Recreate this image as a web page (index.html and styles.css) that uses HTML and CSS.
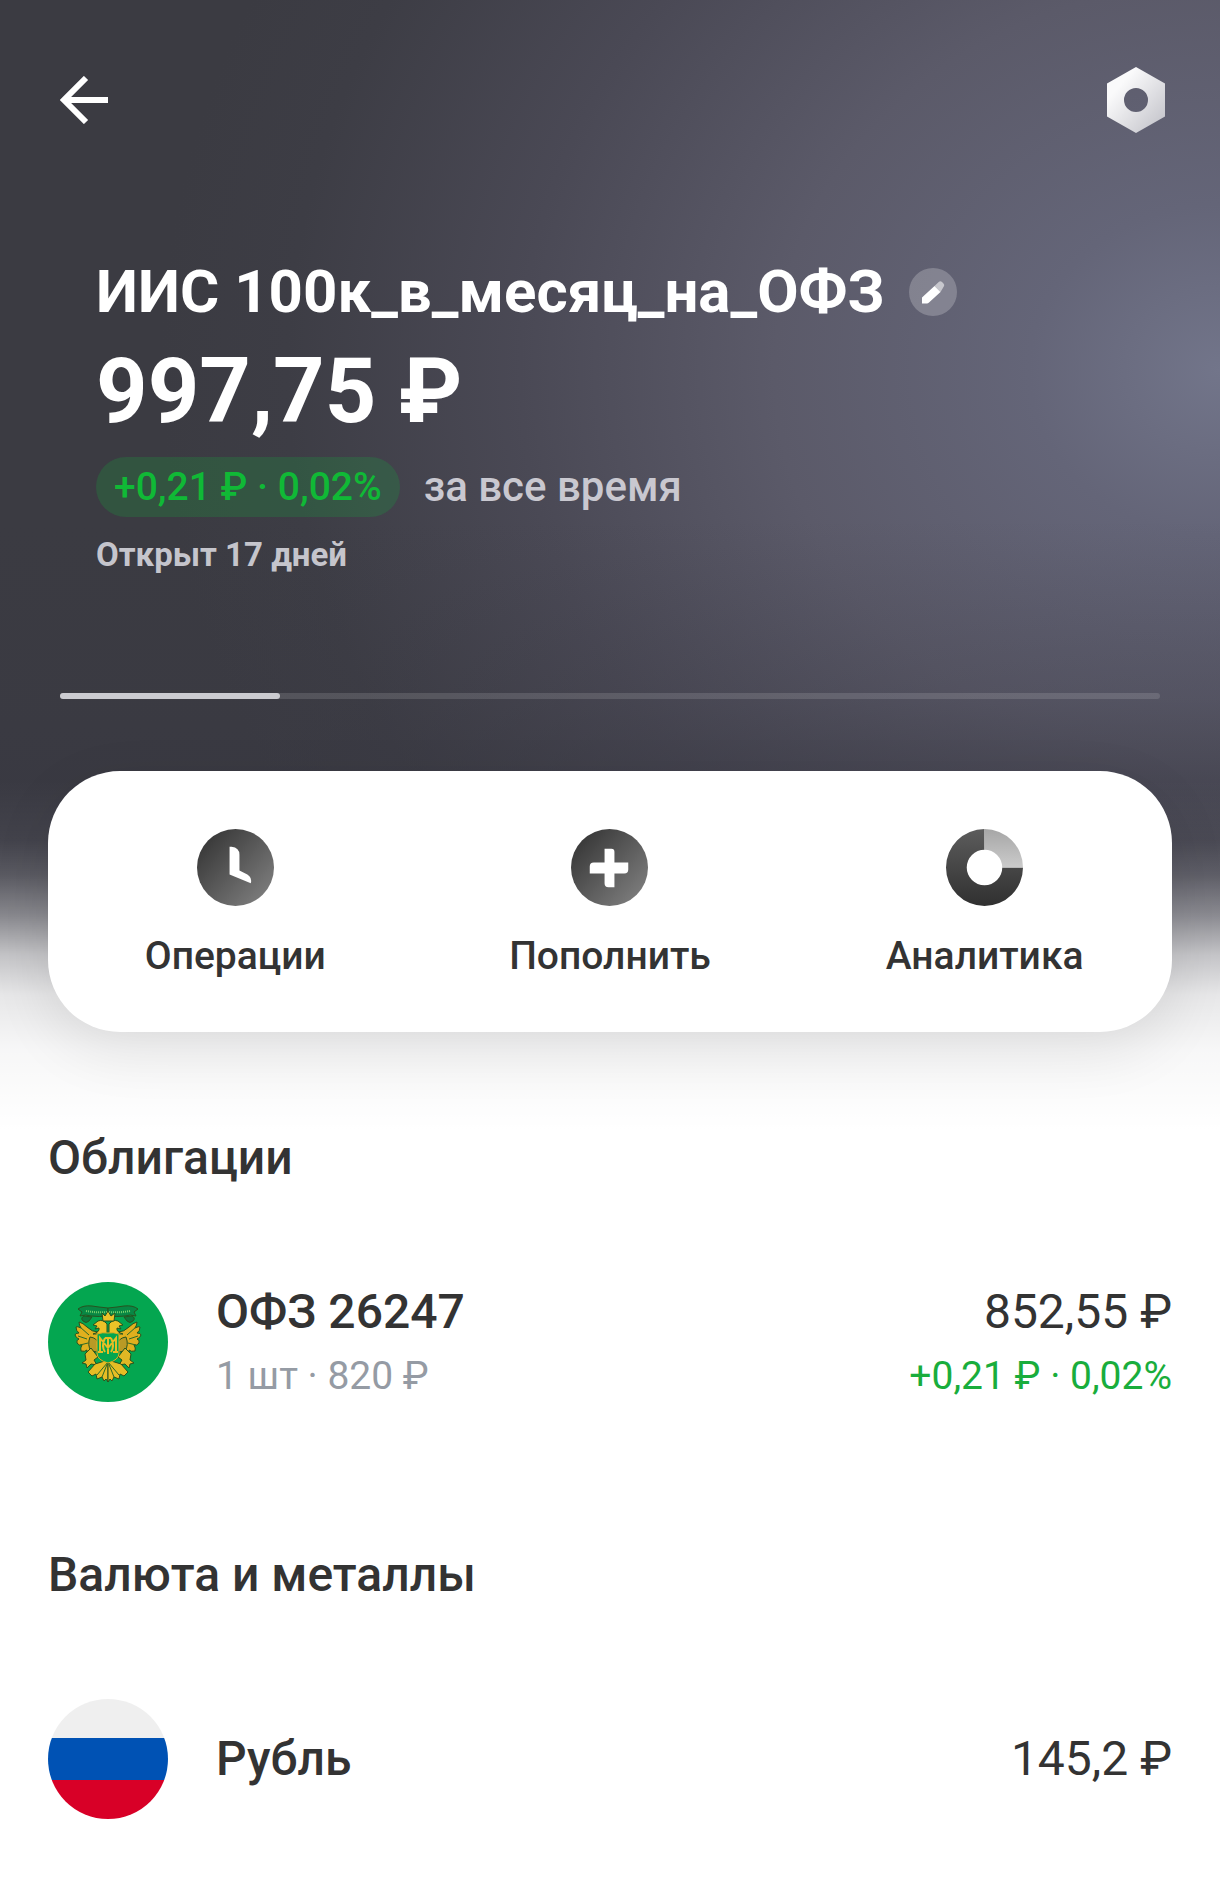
FILE: index.html
```html
<!DOCTYPE html>
<html lang="ru">
<head>
  <meta charset="utf-8">
  <meta name="viewport" content="width=device-width, initial-scale=1">
  <title>ИИС</title>
  <link rel="stylesheet" href="styles.css">
</head>
<body>
  <div class="page">
    <header class="topbar">
      <button class="icon-button" type="button" aria-label="Назад">
        <svg width="48" height="48" viewBox="0 0 48 48" fill="none" stroke="#fff" stroke-width="6"><path d="M48 24H5M26 2 4 24l22 22"/></svg>
      </button>
      <button class="icon-button" type="button" aria-label="Настройки">
        <svg width="66" height="66" viewBox="0 0 66 66">
          <defs><linearGradient id="nut" x1="0" y1="0" x2="1" y2="1"><stop offset=".25" stop-color="#fafafb"/><stop offset="1" stop-color="#bfbfc6"/></linearGradient></defs>
          <path fill="url(#nut)" fill-rule="evenodd" d="M33 0 62 16.500v33L33 66 4 49.500v-33zM33 21a12 12 0 1 0 0 24 12 12 0 0 0 0-24z"/>
        </svg>
      </button>
    </header>

    <section class="summary">
      <div class="title-row">
        <h1 class="title">ИИС 100к_в_месяц_на_ОФЗ</h1>
        <button class="icon-button" type="button" aria-label="Переименовать">
          <svg width="48" height="48" viewBox="0 0 48 48">
            <circle cx="24" cy="24" r="24" fill="#fff" fill-opacity=".22"/>
            <path fill="#fff" d="M13 29.500 25.500 18l6 6L20 34.500q-1 1-2 1h-5z"/>
            <path fill="#fff" fill-opacity=".55" d="m25.500 18 4.500-4.200q1.500-1.200 3 .2l1.500 1.500q1.500 1.500.3 3L31.500 24z"/>
          </svg>
        </button>
      </div>
      <p class="amount">997,75 ₽</p>
      <div class="profit-row">
        <span class="pill">+0,21 ₽ · 0,02%</span>
        <span class="period">за все время</span>
      </div>
      <p class="opened">Открыт 17 дней</p>
    </section>

    <div class="progress"><div class="progress-fill" style="width: 20%"></div></div>

    <nav class="actions">
      <button class="action" type="button">
        <svg width="77" height="77" viewBox="0 0 78 78">
          <defs><linearGradient id="disc" x1=".1" y1=".15" x2=".9" y2=".9"><stop offset="0" stop-color="#393939"/><stop offset="1" stop-color="#7d7d7d"/></linearGradient></defs>
          <circle cx="39" cy="39" r="39" fill="url(#disc)"/>
          <path fill="#fff" d="M33 18h2q8 1 8 8v16l8 4q5 3 3.500 9L33 46z"/>
        </svg>
        <span>Операции</span>
      </button>
      <button class="action" type="button">
        <svg width="77" height="77" viewBox="0 0 78 78">
          <circle cx="39" cy="39" r="39" fill="url(#disc)"/>
          <path fill="#fff" d="M34 20h7q3 0 3 3v11h14v7q0 4-4 4H44v14h-6q-4 0-4-4V45H19v-7q0-4 4-4h11z"/>
        </svg>
        <span>Пополнить</span>
      </button>
      <button class="action" type="button">
        <svg width="77" height="77" viewBox="0 0 78 78">
          <defs>
            <linearGradient id="ring" x1="0" y1="0" x2="0" y2="1"><stop offset="0" stop-color="#5c5c5c"/><stop offset="1" stop-color="#303030"/></linearGradient>
            <linearGradient id="slice" x1="0" y1="0" x2="0" y2="1"><stop offset="0" stop-color="#a6a6a6"/><stop offset="1" stop-color="#cbcbcb"/></linearGradient>
          </defs>
          <path fill="url(#ring)" d="M39 0a39 39 0 1 0 39 39H57a18 18 0 1 1-18-18z"/>
          <path fill="url(#slice)" d="M39 0a39 39 0 0 1 39 39H57a18 18 0 0 0-18-18z"/>
        </svg>
        <span>Аналитика</span>
      </button>
    </nav>

    <main class="holdings">
      <section class="group">
        <h2 class="group-title">Облигации</h2>
        <div class="asset">
          <svg width="120" height="120" viewBox="0 0 120 120" aria-hidden="true">
            <circle cx="60" cy="60" r="60" fill="#04a650"/>
            <g id="emblem-side" stroke="#27531f" stroke-width="1" stroke-linejoin="round">
              <path fill="#088744" d="M60 26q-10-1-16-2-9-1-14 3l4 3-2 4q6-2 11 0 8 1 17 0z"/>
              <path fill="#0b7a3d" d="M36 34q-4 2-1 5t6 0l3-4z"/>
              <path fill="#e0b01e" d="M50 50q-6 0-11-5-4-4-8-5 0 3 2 6-4-2-5-1 0 4 3 6-4 0-4 2 1 3 4 4-3 1-2 4 2 3 5 2-2 3-1 6 4 1 6-1-1 4 1 7l5-6 6-8z"/>
              <path fill="#ecc328" d="M59 52V42q-4-5-9-3l-5 4 4 1-2 3 4-1q1 4-6 6z"/>
              <path fill="#b99a25" d="M42 55q7 1 8 6l-1 9-6-1q-4-6-1-14z"/>
              <path fill="#dfb724" d="m43 66-6 6 1 6-4 3 4 1 1 4 4-4 6 1-3-5 4-3z"/>
              <path fill="#e6bd25" d="M60 78 47 82l-7 8 4 4 4-2 1 5 5-2 2 4 2-2 2 3z"/>
              <path fill="none" stroke="#2c6a27" d="m60 80-11 13M60 80l-6 15M32 45l9 8m-11 1 9 3m-7 6 8-2"/>
              <path fill="none" stroke="#78d06c" stroke-width="2" stroke-dasharray="1 1" d="M38 29q11 2 22 1"/>
            </g>
            <use href="#emblem-side" transform="translate(120 0) scale(-1 1)"/>
            <path fill="#ecc328" stroke="#27531f" d="m54 31 3 3 3-5 3 5 4-3-1 8H55z"/>
            <path fill="#04a650" stroke="#e0b01e" d="M49 52q6-2 11-1 5-1 11 1v19q0 7-11 10-11-3-11-10z"/>
            <path fill="none" stroke="#e6bd25" stroke-width="2" d="M52 70V56l8 10 8-10v14M50 70h5M65 70h5M57 56q-4 8 0 14M63 56q4 8 0 14M60 56v16M57 56h6"/>
          </svg>
          <div class="asset-text">
            <h3 class="asset-name">ОФЗ 26247</h3>
            <p class="asset-note">1 шт · 820 ₽</p>
          </div>
          <div class="asset-text asset-value">
            <p class="asset-sum">852,55 ₽</p>
            <p class="asset-note gain">+0,21 ₽ · 0,02%</p>
          </div>
        </div>
      </section>

      <section class="group">
        <h2 class="group-title">Валюта и металлы</h2>
        <div class="asset">
          <div class="flag" role="img" aria-label="Флаг России"></div>
          <div class="asset-text">
            <h3 class="asset-name">Рубль</h3>
          </div>
          <div class="asset-text asset-value">
            <p class="asset-sum">145,2 ₽</p>
          </div>
        </div>
      </section>
    </main>
  </div>
</body>
</html>
```

FILE: styles.css
```css
* {
  box-sizing: border-box;
}

body,
h1,
h2,
h3,
p {
  margin: 0;
}

body {
  background: #fff;
  color: #333;
  font-family: Roboto, "Noto Sans", sans-serif;
}

button {
  padding: 0;
  border: 0;
  background: none;
  color: inherit;
  font: inherit;
  cursor: pointer;
}

svg {
  display: block;
  flex: none;
}

.page {
  padding: 67px 48px 76px;
  background-color: #fff;
  background-image:
    linear-gradient(to bottom, transparent 780px, rgba(255, 255, 255, 0.05) 840px, rgba(255, 255, 255, 0.17) 875px, rgba(255, 255, 255, 0.4) 915px, rgba(255, 255, 255, 0.7) 955px, rgba(255, 255, 255, 0.88) 995px, rgba(255, 255, 255, 0.96) 1050px, #fff 1130px),
    linear-gradient(to bottom, rgba(56, 56, 66, 0) 520px, rgba(56, 56, 66, 0.25) 700px, rgba(56, 56, 66, 0.75) 850px),
    radial-gradient(1060px 920px at 100% 370px, #72758a 0%, #646578 18%, #5b5a69 42%, #4a4955 66%, #3d3d45 88%, #3b3b42 100%);
  background-repeat: no-repeat;
  background-size: 100% 1140px;
}

.topbar {
  display: flex;
  align-items: center;
  justify-content: space-between;
  padding: 0 3px 0 12px;
}

.summary {
  padding: 123px 48px 0;
  color: #fff;
}

.title-row {
  display: flex;
  align-items: center;
  gap: 24px;
}

.title {
  font-size: 60px;
  line-height: 72px;
  font-weight: 700;
}

.amount {
  margin-top: 10px;
  font-size: 90px;
  line-height: 108px;
  font-weight: 700;
}

.profit-row {
  display: flex;
  align-items: center;
  gap: 24px;
  margin-top: 10px;
}

.pill {
  padding: 0 18px;
  border-radius: 30px;
  background: rgba(16, 185, 60, 0.2);
  color: #10b936;
  font-size: 39px;
  line-height: 60px;
  font-weight: 500;
}

.period {
  color: #c9c8d0;
  font-size: 42px;
  line-height: 62px;
  font-weight: 500;
}

.opened {
  margin-top: 17px;
  color: #c5c5cc;
  font-size: 33px;
  line-height: 40px;
  font-weight: 700;
}

.progress {
  height: 6px;
  margin: 118px 12px 72px;
  border-radius: 3px;
  background: rgba(255, 255, 255, 0.13);
}

.progress-fill {
  height: 6px;
  border-radius: 3px;
  background: #cbcbd0;
}

.actions {
  display: grid;
  grid-template-columns: repeat(3, 1fr);
  padding: 58px 0 52px;
  border-radius: 72px;
  background: #fff;
  box-shadow: 0 18px 60px rgba(0, 0, 0, 0.09);
}

.action {
  display: flex;
  flex-direction: column;
  align-items: center;
  gap: 26px;
  font-size: 39px;
  line-height: 48px;
  font-weight: 500;
}

.holdings {
  display: flex;
  flex-direction: column;
  gap: 145px;
  padding-top: 98px;
}

.group {
  display: flex;
  flex-direction: column;
  gap: 96px;
}

.group-title {
  font-size: 48px;
  line-height: 56px;
  font-weight: 500;
}

.asset {
  display: flex;
  align-items: center;
  gap: 48px;
}

.asset-text {
  display: flex;
  flex-direction: column;
  gap: 12px;
}

.asset-value {
  margin-left: auto;
  text-align: right;
}

.asset-name {
  font-size: 48px;
  line-height: 56px;
  font-weight: 500;
}

.asset-sum {
  font-size: 48px;
  line-height: 56px;
}

.asset-note {
  color: #959ba4;
  font-size: 39px;
  line-height: 48px;
}

.gain {
  color: #19ad3c;
}

.flag {
  width: 120px;
  height: 120px;
  border-radius: 50%;
  background: linear-gradient(#efefef 39px, #0052b4 39px, #0052b4 81px, #d80027 81px);
}
```
